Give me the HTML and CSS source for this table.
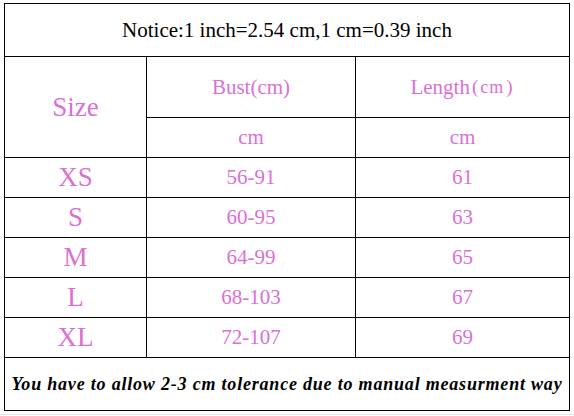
FILE: index.html
```html
<!DOCTYPE html>
<html>
<head>
<meta charset="utf-8">
<link rel="stylesheet" href="styles.css">
</head>
<body>
<div class="sheet">
  <div class="grid">
    <div class="cell notice">Notice:1 inch=2.54 cm,1 cm=0.39 inch</div>
    <div class="cell size-head pink">Size</div>
    <div class="cell head pink">Bust(cm)</div>
    <div class="cell head pink">Length<span class="paren">(</span><span class="cm">cm</span><span class="paren">)</span></div>
    <div class="cell unit pink">cm</div>
    <div class="cell unit pink">cm</div>

    <div class="cell size pink">XS</div><div class="cell val pink">56-91</div><div class="cell val pink">61</div>
    <div class="cell size pink">S</div><div class="cell val pink">60-95</div><div class="cell val pink">63</div>
    <div class="cell size pink">M</div><div class="cell val pink">64-99</div><div class="cell val pink">65</div>
    <div class="cell size pink">L</div><div class="cell val pink">68-103</div><div class="cell val pink">67</div>
    <div class="cell size pink">XL</div><div class="cell val pink">72-107</div><div class="cell val pink">69</div>

    <div class="cell note">You have to allow 2-3 cm tolerance due to manual measurment way</div>
  </div>
</div>
</body>
</html>
```
FILE: styles.css
```css
html, body {
  margin: 0;
  padding: 0;
  background: #ffffff;
}
body {
  width: 574px;
  height: 416px;
  overflow: hidden;
  font-family: "Liberation Serif", "Times New Roman", serif;
}
.sheet {
  padding: 3px 0 0 4px;
  height: 411px;
  border-bottom: 1px solid #e4e4e4;
}
.grid {
  display: grid;
  grid-template-columns: 141px 208px 213px;
  grid-template-rows: 52px 60px 39px repeat(5, 39px) 52px;
  gap: 1px;
  padding: 1px;
  background: #000;
  width: 564px;
}
.cell {
  background: #fff;
  display: flex;
  align-items: center;
  justify-content: center;
  white-space: nowrap;
  font-family: "Liberation Serif", "Times New Roman", serif;
}
.pink {
  color: #da70d6;
}
.notice {
  grid-column: 1 / 4;
  font-size: 21px;
  color: #000;
}
.size-head {
  grid-row: 2 / 4;
  font-size: 27px;
}
.head {
  font-size: 21px;
}
.paren {
  font-size: 19px;
  margin: 0 2px;
}
.cm {
  font-size: 18px;
  letter-spacing: 1px;
}
.unit {
  font-size: 21px;
}
.size {
  font-size: 27px;
}
.val {
  font-size: 21px;
}
.note {
  grid-column: 1 / 4;
  font-size: 18px;
  font-weight: bold;
  font-style: italic;
  color: #000;
  letter-spacing: 0.8px;
}
```
